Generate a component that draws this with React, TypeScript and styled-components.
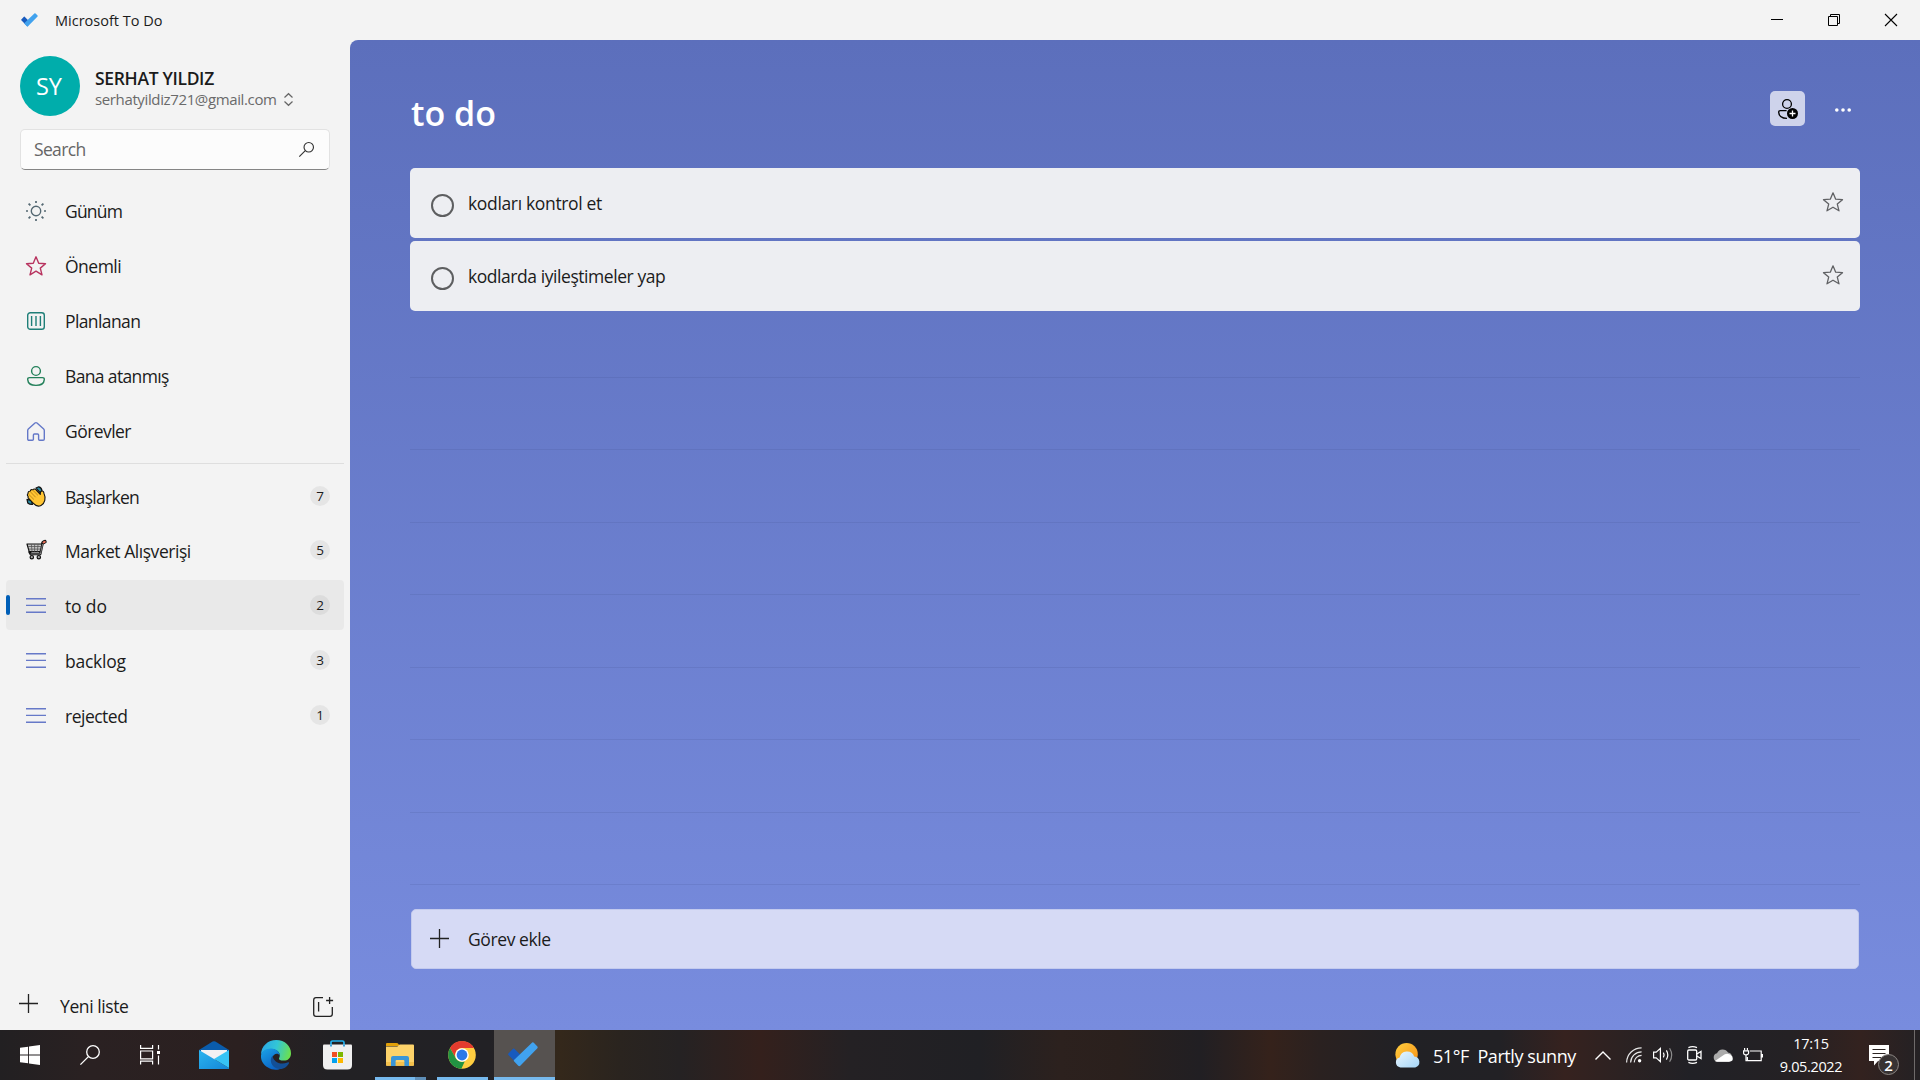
import React from "react";
import styled, { createGlobalStyle } from "styled-components";

const Global = createGlobalStyle`
  * { box-sizing: border-box; }
  html, body { margin: 0; padding: 0; }
  body {
    width: 1920px; height: 1080px; overflow: hidden;
    background: #f3f3f3; color: #1b1b1b;
    font-family: "Open Sans", "Noto Sans", "Liberation Sans", sans-serif;
  }
  svg { display: block; flex: none; overflow: visible; }
`;

const Screen = styled.div`
  display: grid;
  grid-template-rows: 40px 990px 50px;
  width: 1920px;
  height: 1080px;
`;

const Label = styled.span<{ $size?: number; $track?: number; $weight?: number; $color?: string }>`
  display: block;
  white-space: pre;
  font-size: ${(p) => p.$size ?? 17.5}px;
  letter-spacing: ${(p) => p.$track ?? 0}px;
  font-weight: ${(p) => p.$weight ?? 400};
  color: ${(p) => p.$color ?? "inherit"};
  line-height: 24px;
`;

/* Title bar */
const TitleBar = styled.header`
  display: flex;
  align-items: center;
  justify-content: space-between;
  padding: 0 23px 0 21px;
`;
const AppName = styled.div`
  display: flex;
  align-items: center;
  gap: 17px;
  span { padding-top: 1px; }
`;
const WindowButtons = styled.div`
  display: flex;
  align-items: center;
  gap: 45px;
`;

/* Body */
const Body = styled.div`
  display: grid;
  grid-template-columns: 350px 1570px;
`;
const Sidebar = styled.aside`
  display: flex;
  flex-direction: column;
  padding-top: 16px;
`;
const Account = styled.div`
  display: flex;
  height: 60px;
  padding-left: 20px;
  gap: 15px;
`;
const Avatar = styled.div`
  display: flex;
  align-items: center;
  justify-content: center;
  width: 60px;
  height: 60px;
  padding-right: 2px;
  border-radius: 50%;
  background: #00adab;
  color: #fff;
`;
const AccountText = styled.div`
  display: flex;
  flex-direction: column;
  padding-top: 10px;
`;
const Email = styled.div`
  display: flex;
  align-items: center;
  gap: 7px;
  height: 18px;
`;
const SearchBox = styled.div`
  display: flex;
  align-items: center;
  justify-content: space-between;
  width: 310px;
  height: 41px;
  margin: 13px 0 16px 20px;
  padding: 0 15px 1px 13px;
  border: 1px solid #e2e2e2;
  border-bottom: 1px solid #858585;
  border-radius: 5px;
  background: #fcfcfc;
`;
const NavGroup = styled.nav<{ $top?: number }>`
  display: flex;
  flex-direction: column;
  gap: 5px;
  padding: ${(p) => p.$top ?? 0}px 6px 0;
`;
const NavRow = styled.div<{ $active?: boolean; $tight?: boolean }>`
  display: flex;
  align-items: center;
  height: 50px;
  margin-bottom: ${(p) => (p.$tight ? -1 : 0)}px;
  padding-right: 14px;
  border-radius: 4px;
  background: ${(p) => (p.$active ? "#e9e9e9" : "transparent")};
`;
const ActiveMark = styled.i<{ $on?: boolean }>`
  width: 4px;
  height: 20px;
  border-radius: 2px;
  background: ${(p) => (p.$on ? "#005fb8" : "transparent")};
`;
const IconSlot = styled.div`
  display: flex;
  align-items: center;
  justify-content: center;
  width: 52px;
  margin-right: 3px;
`;
const NavText = styled.div<{ $drop: number }>`
  flex: 1;
  padding-top: ${(p) => p.$drop}px;
`;
const Count = styled.div`
  display: flex;
  align-items: center;
  justify-content: center;
  width: 20px;
  height: 20px;
  border-radius: 50%;
  background: rgba(0, 0, 0, 0.055);
`;
const Divider = styled.hr`
  width: 338px;
  height: 1px;
  margin: 7px 6px 0;
  border: 0;
  background: #dedede;
`;
const NewList = styled.div`
  display: flex;
  align-items: flex-start;
  height: 50px;
  margin-top: auto;
  padding: 14px 17px 0 19px;
`;
const NewListText = styled.div`
  flex: 1;
  padding-left: 22px;
`;
const NewGroup = styled.div`
  padding-top: 3px;
`;

/* Main panel */
const Main = styled.main`
  display: flex;
  flex-direction: column;
  padding: 0 60px;
  border-top-left-radius: 8px;
  background: linear-gradient(#5c6fbc, #788cde);
`;
const MainHead = styled.div`
  display: flex;
  justify-content: space-between;
  height: 128px;
  padding: 51px 9px 0 1px;
`;
const ListTitle = styled.h1`
  margin: 0;
  color: #fff;
  font-size: 34px;
  font-weight: 600;
  line-height: 44px;
`;
const HeadActions = styled.div`
  display: flex;
  gap: 30px;
`;
const ShareButton = styled.button`
  display: flex;
  align-items: center;
  justify-content: center;
  width: 35px;
  height: 35px;
  padding: 0;
  border: 0;
  border-radius: 5px;
  background: #ced3eb;
`;
const More = styled.div`
  display: flex;
  align-items: center;
  height: 38px;
`;
const TaskList = styled.div`
  display: flex;
  flex-direction: column;
  gap: 3px;
`;
const Task = styled.div`
  display: flex;
  align-items: center;
  height: 70px;
  padding: 0 17px 0 21px;
  border-radius: 5px;
  background: #edeef2;
`;
const Check = styled.span`
  width: 23px;
  height: 23px;
  margin: 5px 14px 0 0;
  border: 2px solid #5d5e60;
  border-radius: 50%;
`;
const TaskText = styled.div`
  flex: 1;
`;
const TaskStar = styled.div`
  padding-bottom: 2px;
`;
const Rules = styled.div`
  flex: none;
  height: 574px;
`;
const Rule = styled.div<{ $first?: boolean }>`
  height: ${(p) => (p.$first ? 66.5 : 72.5)}px;
  border-bottom: 1px solid rgba(60, 70, 130, 0.14);
`;
const AddTask = styled.div`
  display: flex;
  align-items: center;
  height: 60px;
  margin: 24px 1px 0;
  padding-left: 18px;
  gap: 19px;
  border: 1px solid #c3caee;
  border-radius: 5px;
  background: #d6daf5;
  svg { margin-bottom: 2px; }
`;

/* Taskbar */
const Taskbar = styled.footer`
  display: flex;
  justify-content: space-between;
  background: linear-gradient(
    90deg,
    #222022 0, #2a2122 90px, #2b2020 240px, #222124 330px, #222125 490px,
    #34281b 560px, #2a241f 620px, #252223 680px, #34201c 760px, #242124 850px,
    #202024 980px, #2c211e 1060px, #2a201d 1120px, #211f23 1200px, #35221b 1270px,
    #2a2120 1320px, #212125 1400px, #222125 1500px, #36221f 1565px, #2c2222 1620px,
    #212126 1690px, #242124 1790px, #33221f 1860px, #242124 1920px
  );
`;
const Apps = styled.div`
  display: flex;
`;
const AppSlot = styled.div<{ $w: number; $active?: boolean; $nudge?: number }>`
  display: grid;
  grid-template-rows: 47px 3px;
  justify-items: center;
  align-items: center;
  width: ${(p) => p.$w}px;
  background: ${(p) => (p.$active ? "#565250" : "transparent")};
  svg { margin: 2px ${(p) => p.$nudge ?? 0}px 0 0; }
`;
const Running = styled.i<{ $w: number; $stacked?: boolean }>`
  width: ${(p) => p.$w}px;
  height: 3px;
  background: ${(p) => (p.$stacked ? "linear-gradient(90deg, #76b9ed 40px, #5f8fb8 40px)" : "#76b9ed")};
`;
const Tray = styled.div`
  display: flex;
  align-items: center;
  color: #fff;
`;
const TrayItem = styled.div<{ $w: number; $drop?: number }>`
  display: flex;
  align-items: center;
  justify-content: flex-start;
  width: ${(p) => p.$w}px;
  padding-top: ${(p) => p.$drop ?? 0}px;
`;
const Clock = styled.div`
  display: flex;
  flex-direction: column;
  align-items: center;
  width: 64px;
  margin: 0 26px 0 14px;
  span { line-height: 23px; }
`;
const Notice = styled.div`
  position: relative;
  width: 45px;
  height: 50px;
  padding-top: 15px;
`;
const NoticeCount = styled.div`
  position: absolute;
  left: 9px;
  top: 24px;
  display: flex;
  align-items: center;
  justify-content: center;
  width: 21px;
  height: 21px;
  border: 1px solid #8c8784;
  border-radius: 50%;
  background: #383333;
`;
const DesktopEdge = styled.i`
  width: 6px;
  height: 50px;
  border-left: 1px solid #6e6a6a;
`;

const TodoMark = ({ w, h }: { w: number; h: number }) => (
  <svg width={w} height={h} viewBox="0 0 30 25">
    <path d="M.4 11.6 5 6.8Q5.7 6.1 6.4 6.8L16.4 16.8 11.3 24 .4 13.1Q-.3 12.4.4 11.6Z" fill="#185abd" />
    <path d="M6 18 24.2 0.6Q25 0 25.8.8L29.4 4.6Q30.1 5.4 29.4 6.2L12.3 23.8Q11.3 24.7 10.3 23.8L6 19.2Q5.4 18.6 6 18Z" fill="#41a2ee" />
  </svg>
);

const Plus = () => (
  <svg width="19" height="19" viewBox="0 0 19 19" stroke="#222" strokeWidth="1.3">
    <path d="M9.5 0V19M0 9.5H19" />
  </svg>
);

const STAR = "M10 .8 12.7 7.2 19.5 7.7 14.3 12.1 16 18.8 10 15.2 4 18.8 5.7 12.1 .5 7.7 7.3 7.2Z";
const Star = ({ color, width = 1.3 }: { color: string; width?: number }) => (
  <svg width="20" height="20" viewBox="0 0 20 20" fill="none" stroke={color} strokeWidth={width} strokeLinejoin="round">
    <path d={STAR} />
  </svg>
);

const Sun = () => (
  <svg width="20" height="20" viewBox="0 0 20 20" fill="none" stroke="#546872" strokeWidth="1.7">
    <circle cx="10" cy="10" r="4.7" strokeWidth="1.4" />
    <path d="M10 0V2M10 18V20M0 10H2M18 10H20M2.6 2.6 4.4 4.4M15.6 15.6 17.4 17.4M2.6 17.4 4.4 15.6M15.6 4.4 17.4 2.6" />
  </svg>
);
const Planned = () => (
  <svg width="18" height="18" viewBox="0 0 18 18" fill="none" stroke="#1f7f78" strokeWidth="1.4">
    <rect x=".7" y=".7" width="16.6" height="16.6" rx="2.6" />
    <path d="M4.6 4V14M9 4V14M13.4 4V14" />
  </svg>
);
const Person = () => (
  <svg width="18" height="20" viewBox="0 0 18 20" fill="none" stroke="#23805a" strokeWidth="1.4">
    <circle cx="9" cy="5" r="4.4" />
    <path d="M2.6 11.6H15.4Q17.4 11.6 17.3 13.6C17 17.6 13.6 19.4 9 19.4S1 17.6.7 13.6Q.6 11.6 2.6 11.6Z" />
  </svg>
);
const Home = () => (
  <svg width="18" height="19" viewBox="0 0 18 19" fill="none" stroke="#6478c8" strokeWidth="1.4" strokeLinejoin="round">
    <path d="M.7 8.4Q.7 7.6 1.3 7L8 1Q9 .2 10 1L16.7 7Q17.3 7.6 17.3 8.4V17Q17.3 18.3 16 18.3H12.6Q11.6 18.3 11.6 17.3V13Q11.6 12 10.6 12H7.4Q6.4 12 6.4 13V17.3Q6.4 18.3 5.4 18.3H2Q.7 18.3 .7 17Z" />
  </svg>
);
const Wave = () => (
  <svg width="20" height="21" viewBox="0 0 20 21" strokeLinejoin="round" strokeLinecap="round">
    <path d="M10 2 12.8.8Q15.6 1.6 16 4.8L14 6.6Z" fill="#2b8ba3" stroke="#111" strokeWidth="1.2" />
    <path d="M1 13.4 1.8 17Q3.6 18.6 6.6 18.4L5 14.4Z" fill="#2b8ba3" stroke="#111" strokeWidth="1.2" />
    <path d="M2.2 10.6Q.6 8.6 2 7.6 2 5 4.2 5.2 4.6 3 6.6 3.8 8.4 2 10.2 4L14.3 8.3Q14 5.6 15.6 5 17.6 4.6 18 7.4 19.6 10.6 18.8 14.4 18 18 15 19.4 11 21.4 7.4 17.4L2.6 12.4Q1.6 11.4 2.2 10.6Z" fill="#ffc533" stroke="#111" strokeWidth="1.1" />
    <path d="M4.2 5.6 9.4 11M6.8 4.2 11.6 9M2.6 8.2 7.6 13.2" fill="none" stroke="#b17b12" strokeWidth=".8" />
  </svg>
);
const Cart = () => (
  <svg width="21" height="20" viewBox="0 0 21 20" fill="none" strokeLinejoin="round" strokeLinecap="round">
    <path d="M18.4 2 16.6 3 14.2 14H4.8L3.6 12" stroke="#111" strokeWidth="2.6" />
    <path d="M1 4H16L14.2 11.6H3.2Z" fill="#c4c4c4" stroke="#111" strokeWidth="1.2" />
    <path d="M2.4 6.5H14.8M3.2 9.1H14.2M5.4 4.6 6 11.2M8.6 4.6V11.2M12 4.6 11.4 11.2" stroke="#555" strokeWidth=".8" />
    <path d="M16.8 3.4 14.4 14H5" stroke="#9a9a9a" strokeWidth=".8" />
    <path d="M17.4 2.4 18.9 1.7" stroke="#111" strokeWidth="3.6" />
    <path d="M17.5 2.4 18.8 1.8" stroke="#e8705a" strokeWidth="1.9" />
    <circle cx="5.8" cy="17.2" r="1.7" fill="#aaa" stroke="#111" strokeWidth="1.2" />
    <circle cx="12.8" cy="17.2" r="1.7" fill="#aaa" stroke="#111" strokeWidth="1.2" />
  </svg>
);
const Lines = () => (
  <svg width="20" height="15" viewBox="0 0 20 15" stroke="#6679c8" strokeWidth="1.4">
    <path d="M0 .8H20M0 7.4H20M0 14.2H20" />
  </svg>
);
const Magnifier = ({ size, color, w = 1.3 }: { size: number; color: string; w?: number }) => (
  <svg width={size} height={size} viewBox="0 0 20 20" fill="none" stroke={color} strokeWidth={w}>
    <circle cx="13" cy="7" r="6.3" />
    <path d="M8.4 11.6.4 19.6" />
  </svg>
);

const WindowsLogo = () => (
  <svg width="20" height="20" viewBox="0 0 20 20" fill="#fff">
    <path d="M0 2.8 8.1 1.7V9.5H0ZM9 1.5 20 0V9.5H9ZM0 10.4H8.1V18.3L0 17.2ZM9 10.4H20V20L9 18.5Z" />
  </svg>
);
const TaskView = () => (
  <svg width="20" height="20" viewBox="0 0 20 20" fill="none" stroke="#fff" strokeWidth="1.2">
    <path d="M.6 0V3.4H12.6V0M.6 6H12.6V13.8H.6ZM.6 19.5V16.2H12.6V19.5M18.5 0V4.5M18.5 10.5V19.5" />
    <path d="M17 6H20V9H17Z" fill="#fff" stroke="none" />
  </svg>
);
const Mail = () => (
  <svg width="30" height="28" viewBox="0 0 30 28">
    <defs>
      <linearGradient id="mail" x1="0" y1="0" x2="1" y2="1">
        <stop offset="0" stopColor="#2bb4ef" /><stop offset="1" stopColor="#1487d8" />
      </linearGradient>
    </defs>
    <path d="M0 9 13.6.6Q15 0 16.4.6L30 9V14H0Z" fill="#0a5cab" />
    <path d="M2 9H28V13L15 19 2 13Z" fill="#f1f1f3" />
    <path d="M0 9 30 27V28H0Z" fill="url(#mail)" />
    <path d="M15 18 30 9V27Z" fill="#36c3f5" />
  </svg>
);
const Edge = () => (
  <svg width="30" height="30" viewBox="0 0 30 30">
    <defs>
      <linearGradient id="edgeTop" x1="0" y1=".3" x2="1" y2=".5">
        <stop offset="0" stopColor="#2aa6e6" /><stop offset=".5" stopColor="#32c6d6" /><stop offset="1" stopColor="#6be04f" />
      </linearGradient>
      <linearGradient id="edgeLeft" x1="0" y1="0" x2=".6" y2="1">
        <stop offset="0" stopColor="#1ba4e8" /><stop offset="1" stopColor="#0b62c4" />
      </linearGradient>
    </defs>
    <path d="M0 15C0 6 7 0 15.2 0 24 0 30 6.2 30 13.2 30 18.2 26.6 20.6 22.8 20.6 19.4 20.6 17.6 19.4 18 18.4 20.6 14 17 9.4 11.4 9.2 5 9 .8 12 0 15Z" fill="url(#edgeTop)" />
    <path d="M0 15.4C.6 11 5 8.2 10.4 8.4 15 8.6 18.6 11.6 18.6 15.4 17.4 12.6 12 13 11.2 18.4 10.8 23.4 15 28 20.2 28.6 17 30.2 11.4 30.6 7 27.6 2.2 24.6-.4 20.4 0 15.4Z" fill="url(#edgeLeft)" />
    <path d="M11.6 15.4C8 19.6 10 26 16 28.6 22 30.4 26.4 26.4 28 23.2 28.2 22.2 27.4 22 26.6 22.4 19 25.6 12 21.4 11.6 15.4Z" fill="#134f96" />
  </svg>
);
const Store = () => (
  <svg width="29" height="30" viewBox="0 0 29 30">
    <path d="M8 6.5V2.6Q8 1 9.6 1H19.4Q21 1 21 2.6V6.5" fill="none" stroke="#22b1ee" strokeWidth="1.7" />
    <path d="M0 5.5Q0 4.5 1 4.5H28Q29 4.5 29 5.5V25Q29 29.5 24.5 29.5H4.5Q0 29.5 0 25Z" fill="#f0f0f0" />
    <path d="M8 4.4V6.4M21 4.4V6.4" stroke="#1a93d8" strokeWidth="1.7" />
    <path d="M9 12H14V17H9Z" fill="#f04e23" /><path d="M15 12H20V17H15Z" fill="#7db700" />
    <path d="M9 18H14V23H9Z" fill="#03a2ef" /><path d="M15 18H20V23H15Z" fill="#fdb800" />
  </svg>
);
const Explorer = () => (
  <svg width="28" height="23" viewBox="0 0 28 23">
    <path d="M0 1Q0 0 1 0H10.5Q12 0 12.6 1.2L13.5 3H0Z" fill="#e2a008" />
    <path d="M0 3.4H11.4L13.6 1.4H27Q28 1.4 28 2.4V22Q28 22.8 27 22.8H1Q0 22.8 0 22Z" fill="#fdd36a" />
    <path d="M0 19H28V22Q28 22.8 27 22.8H1Q0 22.8 0 22Z" fill="#f5c14c" />
    <path d="M5 23V15Q5 13 7 13H21Q23 13 23 15V23H18.4V18Q18.4 17 17.4 17H10.6Q9.6 17 9.6 18V23Z" fill="#3a96d8" />
  </svg>
);
const Chrome = () => (
  <svg width="28" height="28" viewBox="0 0 28 28">
    <circle cx="14" cy="14" r="13.8" fill="#ffcd40" />
    <path d="M2 7.1A13.8 13.8 0 0 1 26 7.1H14A6.9 6.9 0 0 0 8 17.4Z" fill="#e33b2e" />
    <path d="M2 7.1 8 17.4A6.9 6.9 0 0 0 16.8 20.3L13.4 27.8A13.8 13.8 0 0 1 2 7.1Z" fill="#229342" />
    <circle cx="14" cy="14" r="6.8" fill="#fff" />
    <circle cx="14" cy="14" r="5.4" fill="#2a78e8" />
  </svg>
);
const Weather = () => (
  <svg width="26" height="25" viewBox="0 0 26 25">
    <defs>
      <linearGradient id="sun" x1="0" y1="0" x2="1" y2="1">
        <stop offset="0" stopColor="#ffcf3f" /><stop offset="1" stopColor="#f78f16" />
      </linearGradient>
      <linearGradient id="cloud" x1="0" y1="0" x2="1" y2="1">
        <stop offset="0" stopColor="#eaf7ff" /><stop offset="1" stopColor="#a5d5f7" />
      </linearGradient>
    </defs>
    <circle cx="11.6" cy="11.2" r="11.2" fill="url(#sun)" />
    <path d="M5.4 24.4A5 5 0 0 1 4.6 14.6 7.6 7.6 0 0 1 19.2 13.4 5.6 5.6 0 0 1 20.2 24.4Z" fill="url(#cloud)" />
  </svg>
);
const Wifi = () => (
  <svg width="16" height="16" viewBox="0 0 16 16" fill="none" stroke="#e8e8e8" strokeWidth="1.2">
    <path d="M.6 15.4A15 15 0 0 1 15.6.8M4.6 15.4A11 11 0 0 1 15.6 4.8M8.2 15.4A7.4 7.4 0 0 1 15.6 8.4" />
    <circle cx="13.6" cy="13.8" r="1.7" fill="#fff" stroke="none" />
  </svg>
);
const Speaker = () => (
  <svg width="21" height="16" viewBox="0 0 21 16" fill="none" stroke="#fff" strokeWidth="1.2">
    <path d="M.6 5.2H3.2L7.4 1.4V14.6L3.2 10.8H.6ZM10.4 5.6Q11.8 8 10.4 10.4M13.4 3.4Q16.2 8 13.4 12.6" />
    <path d="M16.6 1.2Q20.8 8 16.6 14.8" stroke="#8c8c8c" />
  </svg>
);
const Camera = () => (
  <svg width="15" height="18" viewBox="0 0 15 18" fill="none" stroke="#fff" strokeWidth="1.3">
    <rect x=".7" y="4" width="9" height="10" rx="1.2" />
    <path d="M9.8 8 14 5.4V12.6L9.8 10M1.4 1.6Q5.6-.2 10 1.6M1.4 16.4Q5.6 18.2 10 16.4" />
  </svg>
);
const OneDrive = () => (
  <svg width="20" height="13" viewBox="0 0 20 13">
    <path d="M4.4 12.8A4.4 4.4 0 0 1 4 4.2 6.2 6.2 0 0 1 15 3.6 4.8 4.8 0 0 1 16 12.8Z" fill="#ababab" />
    <path d="M2 12 11.4 5.6Q15.6 3 19.4 7.6 21 12.8 16 12.8H4.4Q3 12.8 2 12Z" fill="#fff" />
  </svg>
);
const Battery = () => (
  <svg width="20" height="14" viewBox="0 0 20 14" fill="none" stroke="#fff" strokeWidth="1.2">
    <path d="M7 3H18.2V12.6H4.4V9M19.4 6V9.6M1.6 0V2.6M4.4 0V2.6M3 7V12.6H5" />
    <path d="M.6 2.8H5.6V5Q5.4 6.8 3 6.8T.6 5Z" />
  </svg>
);
const Message = () => (
  <svg width="20" height="21" viewBox="0 0 20 21">
    <path d="M0 0H20V16H9L5 20.5V16H0Z" fill="#fff" />
    <path d="M3.5 4.5H16.5M3.5 8.5H16.5M3.5 12.5H12" stroke="#2b2422" strokeWidth="1.2" />
  </svg>
);

type NavEntry = { text: string; icon: React.ReactNode; track: number; count?: number; active?: boolean };

const smart: NavEntry[] = [
  { text: "Günüm", icon: <Sun />, track: -0.8 },
  { text: "Önemli", icon: <Star color="#b8335f" width={1.4} />, track: -0.5 },
  { text: "Planlanan", icon: <Planned />, track: -0.6 },
  { text: "Bana atanmış", icon: <Person />, track: -0.64 },
  { text: "Görevler", icon: <Home />, track: -0.55 },
];
const lists: NavEntry[] = [
  { text: "Başlarken", icon: <Wave />, track: -0.7, count: 7 },
  { text: "Market Alışverişi", icon: <Cart />, track: -0.46, count: 5 },
  { text: "to do", icon: <Lines />, track: -0.15, count: 2, active: true },
  { text: "backlog", icon: <Lines />, track: -0.26, count: 3 },
  { text: "rejected", icon: <Lines />, track: -0.5, count: 1 },
];
const tasks = [
  { text: "kodları kontrol et", track: -0.34 },
  { text: "kodlarda iyileştimeler yap", track: -0.44 },
];

const NavItem = ({ entry, tight }: { entry: NavEntry; tight?: boolean }) => (
  <NavRow $active={entry.active} $tight={tight}>
    <ActiveMark $on={entry.active} />
    <IconSlot>{entry.icon}</IconSlot>
    <NavText $drop={entry.count === undefined ? 0 : 2}><Label $track={entry.track}>{entry.text}</Label></NavText>
    {entry.count !== undefined && <Count><Label $size={13.5}>{entry.count}</Label></Count>}
  </NavRow>
);

export default function App() {
  return (
    <>
      <Global />
      <Screen>
        <TitleBar>
          <AppName>
            <TodoMark w={17} h={14} />
            <Label $size={14.5}>Microsoft To Do</Label>
          </AppName>
          <WindowButtons>
            <svg width="12" height="12" viewBox="0 0 12 12"><path d="M0 5.5H12" stroke="#000" /></svg>
            <svg width="12" height="12" viewBox="0 0 12 12" fill="none" stroke="#000">
              <path d="M.5 2.5H9.5V11.5H.5ZM2.5 2.5V.5H11.5V9.5H9.5" />
            </svg>
            <svg width="12" height="12" viewBox="0 0 12 12"><path d="M0 0 12 12M12 0 0 12" stroke="#000" strokeWidth="1.1" /></svg>
          </WindowButtons>
        </TitleBar>
        <Body>
          <Sidebar>
            <Account>
              <Avatar><Label $size={23.5}>SY</Label></Avatar>
              <AccountText>
                <Label $weight={600} $track={-0.33}>SERHAT YILDIZ</Label>
                <Email>
                  <Label $size={15} $track={-0.37} $color="#6a6a6a">serhatyildiz721@gmail.com</Label>
                  <svg width="9" height="13" viewBox="0 0 9 13" fill="none" stroke="#666" strokeWidth="1.2">
                    <path d="M.5 4.5 4.5.7 8.5 4.5M.5 8.5 4.5 12.3 8.5 8.5" />
                  </svg>
                </Email>
              </AccountText>
            </Account>
            <SearchBox>
              <Label $color="#666" $track={-0.65}>Search</Label>
              <Magnifier size={15} color="#333" w={1.5} />
            </SearchBox>
            <NavGroup>{smart.map((e) => <NavItem key={e.text} entry={e} />)}</NavGroup>
            <Divider />
            <NavGroup $top={7}>{lists.map((e, i) => <NavItem key={e.text} entry={e} tight={i === 0} />)}</NavGroup>
            <NewList>
              <Plus />
              <NewListText><Label $track={-0.4}>Yeni liste</Label></NewListText>
              <NewGroup>
                <svg width="20" height="20" viewBox="0 0 20 20" fill="none" stroke="#222" strokeWidth="1.3">
                  <path d="M10 .7H3Q.7.7.7 3V17Q.7 19.3 3 19.3H17Q19.3 19.3 19.3 17V10M5.6 5V14.5M16.6 0V7M13.1 3.5H20.1" />
                </svg>
              </NewGroup>
            </NewList>
          </Sidebar>
          <Main>
            <MainHead>
              <ListTitle>to do</ListTitle>
              <HeadActions>
                <ShareButton>
                  <svg width="20" height="20" viewBox="0 0 20 20" fill="none" stroke="#000" strokeWidth="1.3">
                    <circle cx="9" cy="5" r="4.4" />
                    <path d="M8.6 11.6H2.4Q.6 11.6.7 13.4C1 17.6 4.4 19.4 9 19.4" />
                    <circle cx="14.5" cy="14.5" r="5.5" fill="#000" stroke="none" />
                    <path d="M14.5 11.5V17.5M11.5 14.5H17.5" stroke="#fff" />
                  </svg>
                </ShareButton>
                <More>
                  <svg width="16" height="4" viewBox="0 0 16 4" fill="#fff">
                    <circle cx="1.8" cy="2" r="1.8" /><circle cx="8" cy="2" r="1.8" /><circle cx="14.2" cy="2" r="1.8" />
                  </svg>
                </More>
              </HeadActions>
            </MainHead>
            <TaskList>
              {tasks.map((t) => (
                <Task key={t.text}>
                  <Check />
                  <TaskText><Label $track={t.track}>{t.text}</Label></TaskText>
                  <TaskStar><Star color="#606164" /></TaskStar>
                </Task>
              ))}
            </TaskList>
            <Rules>
              {Array.from({ length: 8 }, (_, i) => <Rule key={i} $first={i === 0} />)}
            </Rules>
            <AddTask>
              <Plus />
              <Label $track={-0.4}>Görev ekle</Label>
            </AddTask>
          </Main>
        </Body>
        <Taskbar>
          <Apps>
            <AppSlot $w={60}><WindowsLogo /></AppSlot>
            <AppSlot $w={60}><Magnifier size={20} color="#fff" /></AppSlot>
            <AppSlot $w={60}><TaskView /></AppSlot>
            <AppSlot $w={68}><Mail /></AppSlot>
            <AppSlot $w={56}><Edge /></AppSlot>
            <AppSlot $w={67}><Store /></AppSlot>
            <AppSlot $w={59} $nudge={2}><Explorer /><Running $w={51} $stacked /></AppSlot>
            <AppSlot $w={64}><Chrome /><Running $w={51} /></AppSlot>
            <AppSlot $w={61} $nudge={3} $active><TodoMark w={30} h={25} /><Running $w={61} /></AppSlot>
          </Apps>
          <Tray>
            <TrayItem $w={38}><Weather /></TrayItem>
            <TrayItem $w={162} $drop={2}><Label $size={18} $track={-0.42}>51°F  Partly sunny</Label></TrayItem>
            <TrayItem $w={31}>
              <svg width="16" height="9" viewBox="0 0 16 9" fill="none" stroke="#fff" strokeWidth="1.4"><path d="M.5 8.5 8 1 15.5 8.5" /></svg>
            </TrayItem>
            <TrayItem $w={27}><Wifi /></TrayItem>
            <TrayItem $w={34}><Speaker /></TrayItem>
            <TrayItem $w={26}><Camera /></TrayItem>
            <TrayItem $w={30}><OneDrive /></TrayItem>
            <TrayItem $w={22}><Battery /></TrayItem>
            <Clock>
              <Label $size={14.5} $track={-0.25}>17:15</Label>
              <Label $size={14.5} $track={-0.35}>9.05.2022</Label>
            </Clock>
            <Notice>
              <Message />
              <NoticeCount><Label $size={15} $weight={600}>2</Label></NoticeCount>
            </Notice>
            <DesktopEdge />
          </Tray>
        </Taskbar>
      </Screen>
    </>
  );
}
